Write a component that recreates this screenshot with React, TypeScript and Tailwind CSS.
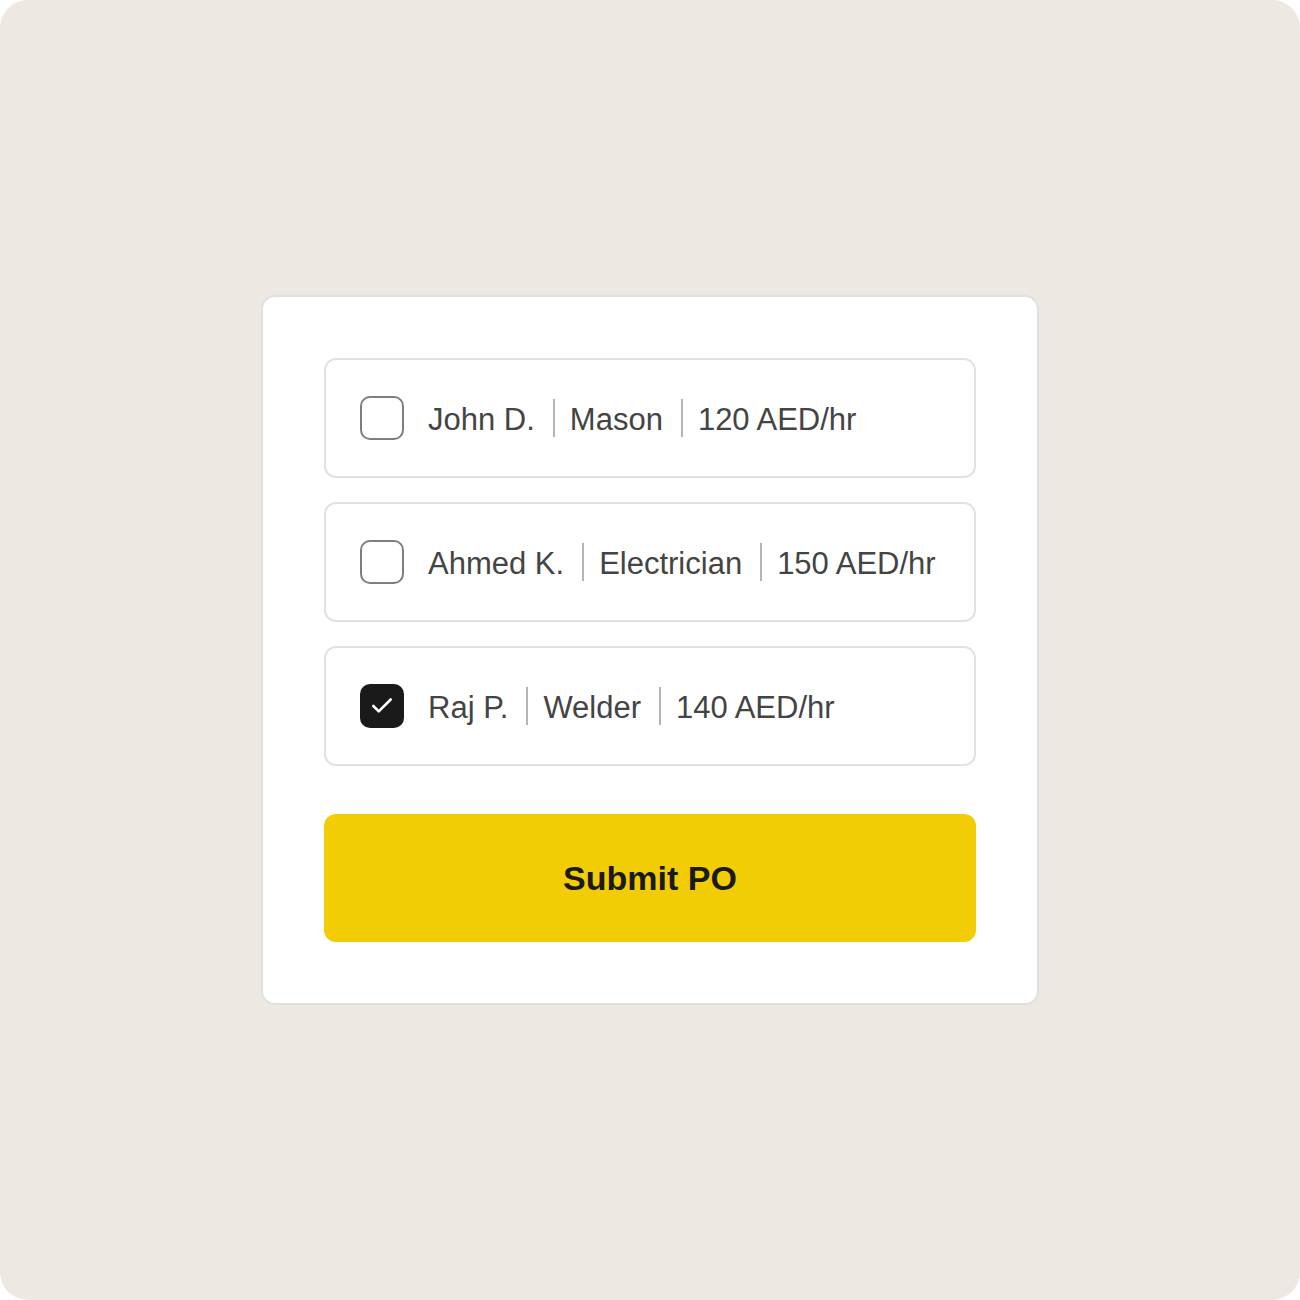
import { Check } from "lucide-react";

type Worker = {
  name: string;
  trade: string;
  rate: string;
  checked: boolean;
};

const workers: Worker[] = [
  { name: "John D.", trade: "Mason", rate: "120 AED/hr", checked: false },
  { name: "Ahmed K.", trade: "Electrician", rate: "150 AED/hr", checked: false },
  { name: "Raj P.", trade: "Welder", rate: "140 AED/hr", checked: true },
];

function Divider() {
  return <span className="ml-[18px] mr-[15px] h-[38px] w-[2px] bg-[#b5b5b5]" />;
}

function WorkerRow({ worker }: { worker: Worker }) {
  return (
    <label className="flex h-[120px] items-center rounded-[12px] border-2 border-[#e2e2e2] bg-white pl-[34px]">
      {worker.checked ? (
        <span className="flex h-[44px] w-[44px] items-center justify-center rounded-[10px] bg-[#1a1a1a]">
          <Check className="h-[26px] w-[26px] text-white" strokeWidth={2.4} />
        </span>
      ) : (
        <span className="h-[44px] w-[44px] rounded-[10px] border-2 border-[#7e7e7e] bg-white" />
      )}
      <span className="ml-[24px] flex items-center text-[31px] text-[#444444]">
        <span className="pt-[4px]">{worker.name}</span>
        <Divider />
        <span className="pt-[4px]">{worker.trade}</span>
        <Divider />
        <span className="pt-[4px]">{worker.rate}</span>
      </span>
    </label>
  );
}

export default function App() {
  return (
    <div className="bg-white">
      <div
        className="flex h-[1300px] w-[1300px] items-center justify-center rounded-[28px] bg-[#ede8e2]"
        style={{ fontFamily: '"Liberation Sans", Arial, sans-serif' }}
      >
        <div className="w-[778px] rounded-[14px] border-2 border-[#e0e0e0] bg-white p-[61px]">
          <div className="flex flex-col gap-[24px]">
            {workers.map((w) => (
              <WorkerRow key={w.name} worker={w} />
            ))}
          </div>
          <button className="mt-[48px] flex h-[128px] w-full items-center justify-center rounded-[12px] bg-[#f2cc05] text-[34px] font-bold text-[#1a1a1a]">
            Submit PO
          </button>
        </div>
      </div>
    </div>
  );
}
